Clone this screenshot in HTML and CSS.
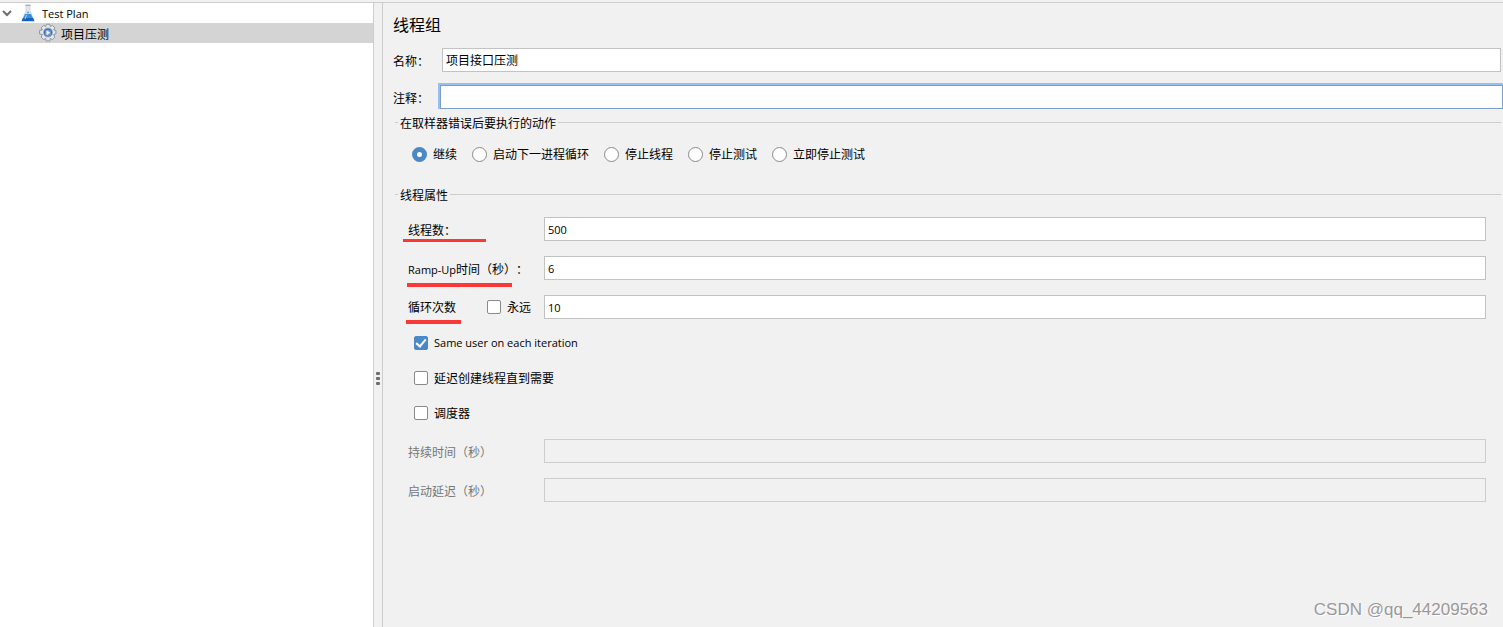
FILE: index.html
```html
<!DOCTYPE html>
<html lang="zh-CN">
<head>
<meta charset="utf-8">
<title>线程组</title>
<link rel="stylesheet" href="styles.css">
</head>
<body>
<div class="app">
  <nav class="tree" aria-label="Test Plan">
    <div class="tree-row">
      <svg class="chevron" width="14" height="14" viewBox="0 0 14 14"><path d="M3 5l4 4 4-4" fill="none" stroke="#6e6e6e" stroke-width="2"/></svg>
      <svg class="flask" width="16" height="18" viewBox="0 0 16 18">
        <path d="M6 1h4v6l4 9.500H2L6 7z" fill="#dfe6ee" stroke="#c3ccd6" stroke-width=".7"/>
        <path d="M5 10h6l3 6.500H2z" fill="#3d8fe0"/>
        <path d="M3 14h10l1.500 3.200h-13z" fill="#1563bd"/>
        <path d="M5.500 1.300h5" stroke="#9aa5b0"/>
        <circle cx="8" cy="8.500" r="1" fill="#4e9be8"/>
        <path d="M5 15l1.500-4" stroke="#a9d2f8"/>
      </svg>
      <span class="latin">Test Plan</span>
    </div>
    <div class="tree-row tree-row-child selected">
      <svg class="gear" width="20" height="20" viewBox="0 0 20 20">
        <path d="M8.200 1.300h3.600l.5 2.300 2-1.300 2.600 2.600-1.300 2 2.300.5v3.600l-2.300.5 1.300 2.600-2.600 2.600-2-1.300-.5 2.600H8.200l-.5-2.600-2 1.300-2.600-2.600 1.300-2.600-2.800-.5V7.400l2.800-.5-1.300-2 2.600-2.600 2 1.300z" fill="#e3e6ea" stroke="#8f959b" stroke-linejoin="round"/>
        <circle cx="10" cy="9.500" r="4.500" fill="#34599a" stroke="#a4b3ca"/>
        <circle cx="10" cy="9.700" r="3.200" fill="#6c9bd8"/>
        <path d="M8.800 7.700l3 2-3 2z" fill="#fff" stroke="#eef4fb" stroke-width=".6"/>
      </svg>
      <span>项目压测</span>
    </div>
  </nav>
  <div class="splitter"><i></i><i></i><i></i></div>
  <main class="panel">
    <h1 class="title">线程组</h1>
    <div class="head-row">
      <label for="name">名称：</label>
      <input class="field name-field" id="name" type="text" value="项目接口压测">
    </div>
    <div class="head-row comment-row">
      <label for="comment">注释：</label>
      <input class="field focused" id="comment" type="text">
    </div>
    <fieldset class="group">
      <legend>在取样器错误后要执行的动作</legend>
      <div class="radios">
        <label class="option"><input class="radio" type="radio" name="action" checked>继续</label>
        <label class="option"><input class="radio" type="radio" name="action">启动下一进程循环</label>
        <label class="option"><input class="radio" type="radio" name="action">停止线程</label>
        <label class="option"><input class="radio" type="radio" name="action">停止测试</label>
        <label class="option"><input class="radio" type="radio" name="action">立即停止测试</label>
      </div>
    </fieldset>
    <fieldset class="group">
      <legend>线程属性</legend>
      <div class="props">
        <div class="prop">
          <label class="marked mark-threads" for="threads">线程数：</label>
          <input class="field" id="threads" type="text" value="500">
        </div>
        <div class="prop">
          <label class="marked mark-ramp" for="ramp"><span class="latin">Ramp-Up</span>时间（秒）：</label>
          <input class="field" id="ramp" type="text" value="6">
        </div>
        <div class="prop">
          <div class="loop">
            <label class="marked mark-loop" for="loops">循环次数</label>
            <label class="option"><input class="check" type="checkbox">永远</label>
          </div>
          <input class="field" id="loops" type="text" value="10">
        </div>
      </div>
      <div class="checks">
        <label class="option latin"><input class="check" type="checkbox" checked>Same user on each iteration</label>
        <label class="option"><input class="check" type="checkbox">延迟创建线程直到需要</label>
        <label class="option"><input class="check" type="checkbox">调度器</label>
      </div>
      <div class="props">
        <div class="prop off">
          <label for="duration">持续时间（秒）</label>
          <input class="field" id="duration" type="text" disabled>
        </div>
        <div class="prop off">
          <label for="delay">启动延迟（秒）</label>
          <input class="field" id="delay" type="text" disabled>
        </div>
      </div>
    </fieldset>
  </main>
  <div class="watermark">CSDN @qq_44209563</div>
</div>
</body>
</html>
```
FILE: styles.css
```css
*, *::before, *::after { box-sizing: border-box; }

body {
  margin: 0;
  background: #f1f1f1;
  color: #000;
  font: 12px/18px "Noto Sans CJK SC", sans-serif;
  text-spacing-trim: space-all;
}

.latin, .field { font-family: "Open Sans", "Noto Sans CJK SC", sans-serif; }

.latin { font-size: 11px; }

.app {
  position: relative;
  display: flex;
  min-height: 100vh;
  padding-top: 3px;
}

.app::before {
  content: "";
  position: absolute;
  top: 2px;
  left: 0;
  right: 0;
  height: 1px;
  background: #cdcdcd;
}

.tree {
  flex: 0 0 374px;
  background: #fff;
  border-right: 1px solid #cdcdcd;
}

.tree-row {
  display: flex;
  align-items: center;
  height: 20px;
}

.tree-row span { padding-top: 2px; }
.tree-row-child { padding-left: 38px; gap: 3px; }
.selected { background: #d4d4d4; }
.flask { margin: 0 6px 0 6px; }

.splitter {
  flex: 0 0 9px;
  display: flex;
  flex-direction: column;
  align-items: center;
  gap: 2px;
  padding-top: 369px;
  border-right: 1px solid #cdcdcd;
}

.splitter i {
  width: 4px;
  height: 3px;
  border-radius: 1px;
  background: #6e6e6e;
}

.panel { flex: 1; min-width: 0; }

.title {
  margin: 11px 0 14px 10px;
  font-size: 16px;
  line-height: 20px;
  font-weight: 400;
}

.head-row {
  display: flex;
  align-items: center;
  margin-bottom: 13px;
  padding-left: 10px;
}

.head-row label { flex: 0 0 47px; padding-top: 2px; }
.name-field { margin: 0 2px; }
.comment-row { margin-bottom: 3px; }

.field {
  flex: 1;
  min-width: 0;
  height: 24px;
  padding: 0 3px;
  border: 1px solid #c2c2c2;
  border-radius: 0;
  background: #fff;
  color: #000;
  font-size: 12px;
  outline: none;
}

.prop .field { font-size: 11px; }

.focused {
  border-color: #7a9fcf;
  box-shadow: -1px -1px 0 1px #97c0f0;
}

.field:disabled { background: #f1f1f1; border-color: #cdcdcd; }

.group {
  margin: 0 2px 0 12px;
  padding: 0;
  border: 0;
  border-top: 1px solid #cdcdcd;
  min-width: 0;
}

.group legend { margin-left: 3px; padding: 2px 2px 0; }

.radios {
  display: flex;
  gap: 15px;
  padding: 13px 0 21px 17px;
}

.option { display: flex; align-items: center; }

.radio, .check {
  appearance: none;
  margin: 0;
  border: 1px solid #8a8a8a;
  background: #fff;
}

.radio { width: 15px; height: 15px; margin-right: 6px; border-radius: 50%; }
.radio:checked { border: 5px solid #4a88c7; }
.check { width: 14px; height: 14px; margin-right: 6px; border-radius: 2px; }

.check:checked {
  position: relative;
  border-color: #4a88c7;
  background: #4a88c7;
}

.check:checked::after {
  content: "";
  position: absolute;
  left: 3px;
  top: 0;
  width: 6px;
  height: 10px;
  border: solid #fff;
  border-width: 0 2px 2px 0;
  transform: rotate(40deg);
}

.props {
  display: grid;
  gap: 15px;
  padding: 13px 15px 0 13px;
}

.prop {
  display: grid;
  grid-template-columns: 136px 1fr;
  align-items: center;
}

.prop > label { justify-self: start; padding-top: 2px; }
.off { color: #777; }

.loop {
  display: flex;
  justify-content: space-between;
  padding-right: 13px;
}

.marked { position: relative; }

.marked::after {
  content: "";
  position: absolute;
  background: #fb3838;
}

.mark-threads::after { left: -5px; top: 20px; width: 83px; height: 3px; }
.mark-ramp::after { left: -1px; top: 25px; width: 105px; height: 4px; }
.mark-loop::after { left: -2px; top: 22px; width: 55px; height: 4px; }

.checks {
  display: grid;
  justify-items: start;
  gap: 17px;
  padding: 15px 0 4px 19px;
}

.watermark {
  position: absolute;
  right: 15px;
  bottom: 7px;
  color: #999;
  font: 17px/20px "Liberation Sans", sans-serif;
  text-shadow: 1px 1px 0 #fff;
}
```
